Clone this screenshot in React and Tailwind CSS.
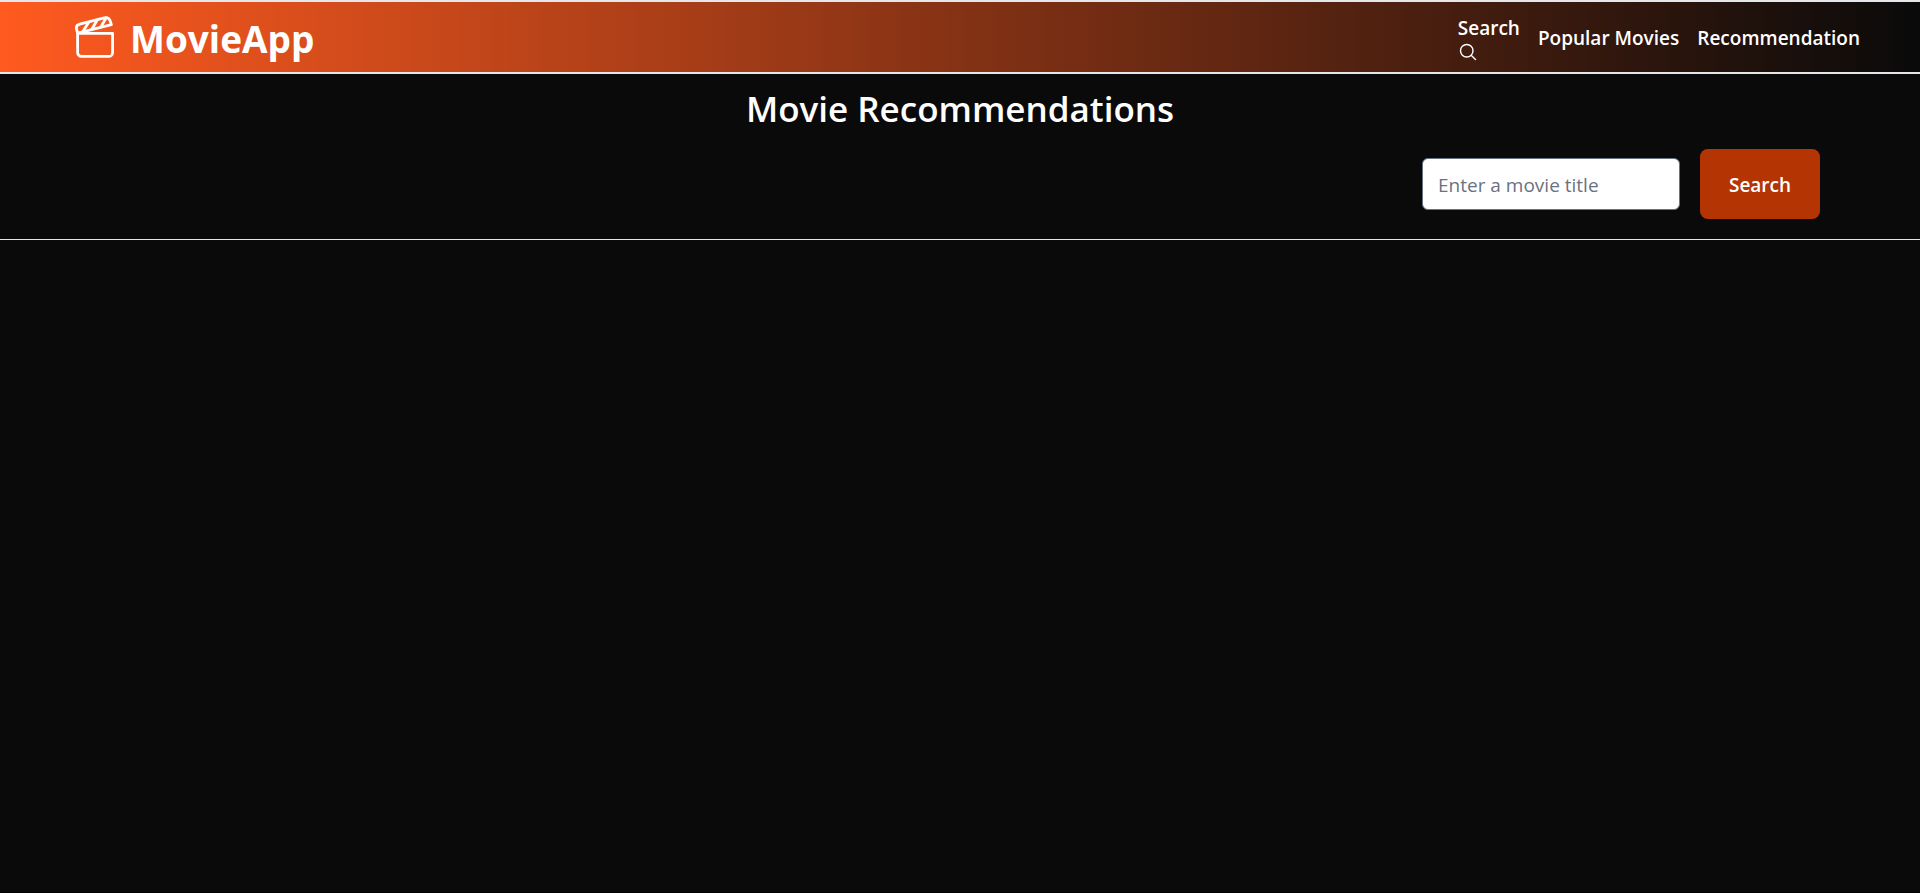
const links = "hover:underline";

function ClapperIcon() {
  return (
    <svg
      className="h-11 w-10"
      viewBox="0 0 40 44"
      fill="none"
      stroke="currentColor"
      strokeWidth="2.8"
      strokeLinejoin="round"
      strokeLinecap="round"
      aria-hidden="true"
    >
      <path d="M2.6 18.4H37.6V37.4a4 4 0 0 1-4 4H6.6a4 4 0 0 1-4-4Z" />
      <path d="M2.8 18.2 1.6 14.5C0.9 11.9 2.3 9.9 4.7 9.2L29.2 2.8C32 2.1 34.2 3.4 35.1 5.8L36.4 9.6Z" />
      <path d="M8 16.2 13.6 7.4M17 14 22.2 5M26 11.8 31 3" />
    </svg>
  );
}

function SearchIcon() {
  return (
    <svg
      className="size-5"
      viewBox="0 0 24 24"
      fill="none"
      stroke="currentColor"
      strokeWidth="1.7"
      strokeLinejoin="round"
      strokeLinecap="round"
      aria-hidden="true"
    >
      <path d="m21 21-5.197-5.197m0 0A7.5 7.5 0 1 0 5.196 5.196a7.5 7.5 0 0 0 10.607 10.607Z" />
    </svg>
  );
}

export default function App() {
  return (
    <div className="min-h-screen border-b border-black bg-[#0a0a0a] font-['Open_Sans','Noto_Sans',sans-serif] text-white">
      <header className="border-y-2 border-gray-200 bg-linear-to-r/srgb from-[#ff5a1f] to-[#0a0a0a]">
        <nav className="flex h-[70px] items-center justify-between pr-[60px] pl-[75px]">
          <a href="#home" className="flex items-center gap-[15px]">
            <ClapperIcon />
            <span className="pt-1 text-[37px] leading-[48px] font-bold">MovieApp</span>
          </a>
          <ul className="flex items-center gap-[18px] pt-0.5 text-[19px] leading-7 font-semibold">
            <li>
              <a href="#search" className={links}>
                Search
                <SearchIcon />
              </a>
            </li>
            <li>
              <a href="#popular" className={links}>Popular Movies</a>
            </li>
            <li>
              <a href="#recommendation" className={links}>Recommendation</a>
            </li>
          </ul>
        </nav>
      </header>
      <main>
        <section className="border-b border-gray-200 pt-[11px] pb-5">
          <h1 className="text-center text-[35px] leading-[48px] font-semibold">Movie Recommendations</h1>
          <form className="mt-4 flex items-center justify-end gap-5 pr-[100px]" onSubmit={(e) => e.preventDefault()}>
            <input
              type="text"
              aria-label="Movie title"
              placeholder="Enter a movie title"
              className="h-[52px] w-[258px] rounded-md border border-gray-500 bg-white px-[15px] pt-0.5 text-[19px] text-gray-900 placeholder:text-gray-500"
            />
            <button type="submit" className="h-[70px] w-[120px] rounded-lg bg-[#b43403] pt-0.5 text-[19px] font-semibold">
              Search
            </button>
          </form>
        </section>
      </main>
    </div>
  );
}
